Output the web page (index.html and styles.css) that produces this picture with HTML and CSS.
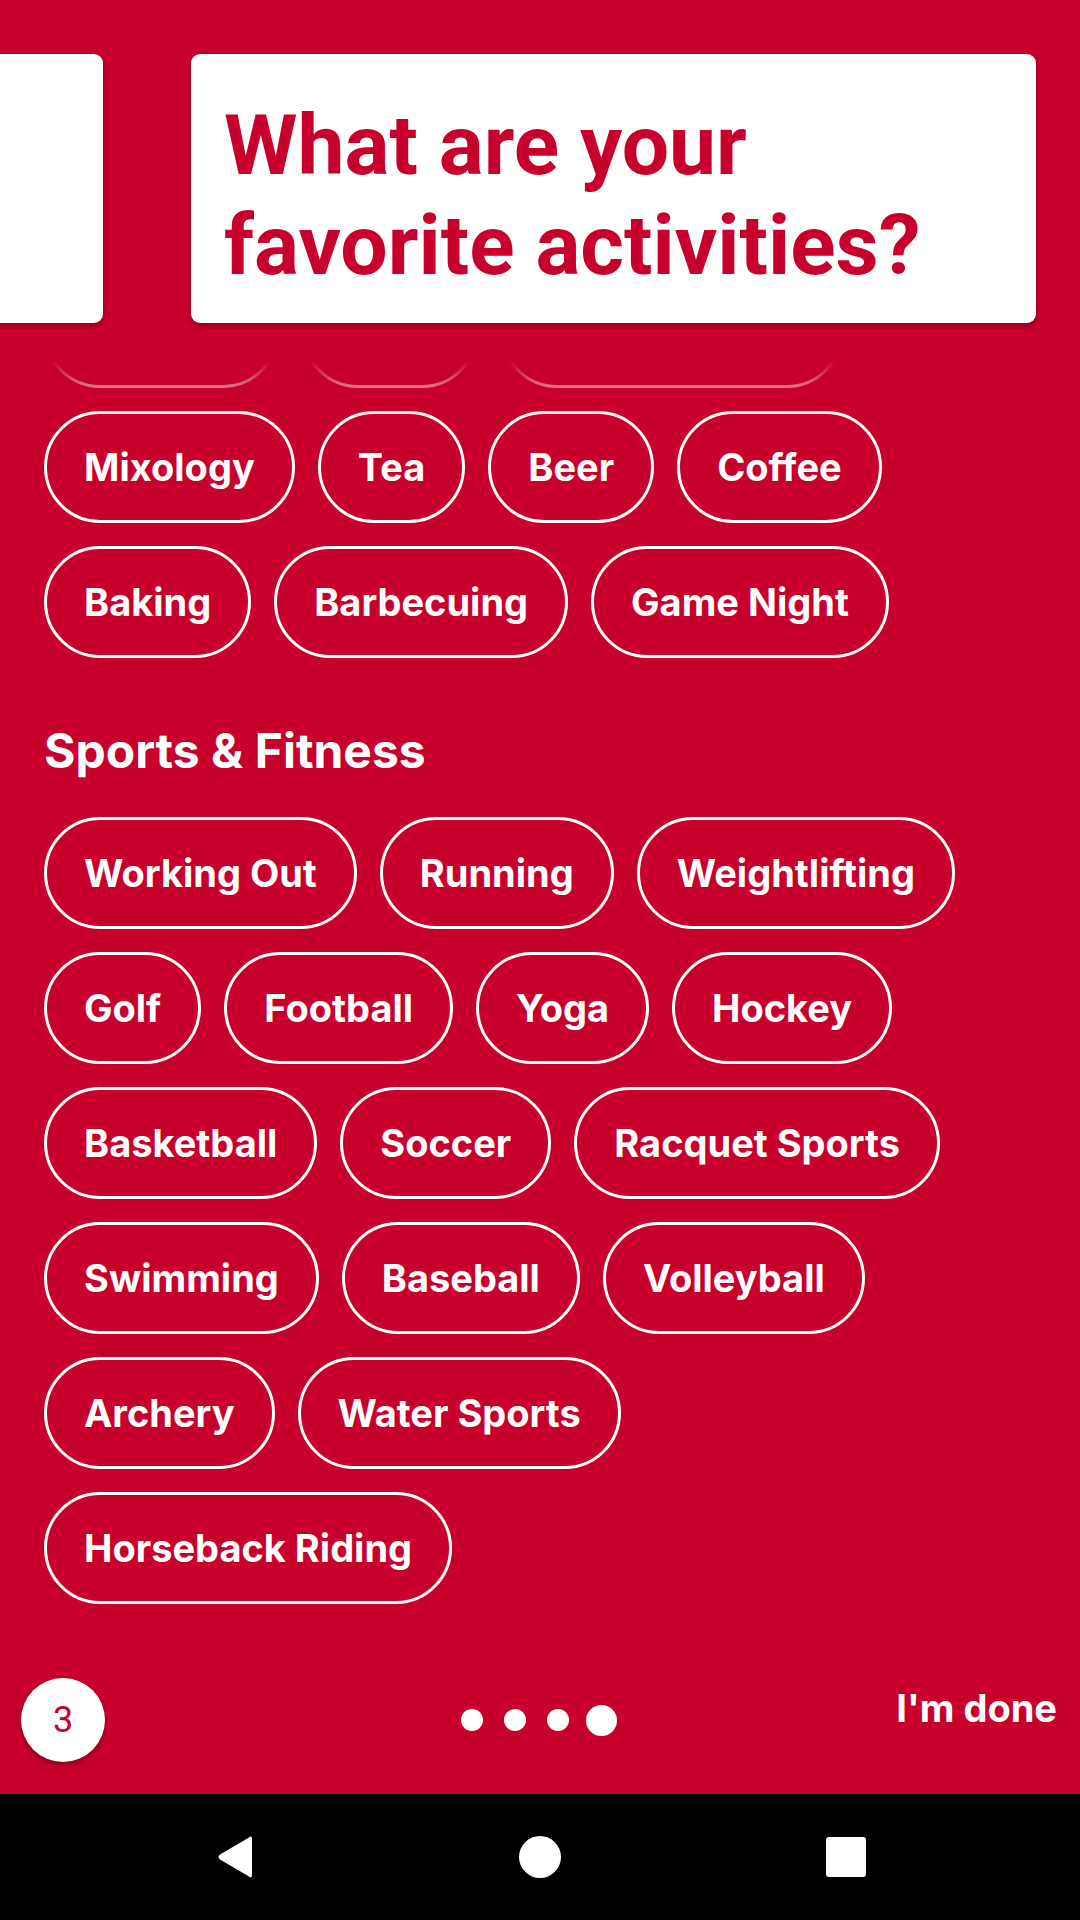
FILE: index.html
```html
<!DOCTYPE html>
<html>
<head>
<meta charset="utf-8">
<link rel="stylesheet" href="styles.css">
</head>
<body>
<div class="screen">
  <div class="scroll">
    <div class="chips">
      <span class="chip">Cooking</span>
      <span class="chip">Wine</span>
      <span class="chip">Dinner Parties</span>
    </div>
    <div class="chips">
      <span class="chip">Mixology</span>
      <span class="chip">Tea</span>
      <span class="chip">Beer</span>
      <span class="chip">Coffee</span>
      <span class="chip">Baking</span>
      <span class="chip">Barbecuing</span>
      <span class="chip">Game Night</span>
    </div>
    <h2 class="section">Sports &amp; Fitness</h2>
    <div class="chips">
      <span class="chip">Working Out</span>
      <span class="chip">Running</span>
      <span class="chip">Weightlifting</span>
      <span class="chip">Golf</span>
      <span class="chip">Football</span>
      <span class="chip">Yoga</span>
      <span class="chip">Hockey</span>
      <span class="chip">Basketball</span>
      <span class="chip">Soccer</span>
      <span class="chip">Racquet Sports</span>
      <span class="chip">Swimming</span>
      <span class="chip">Baseball</span>
      <span class="chip">Volleyball</span>
      <span class="chip">Archery</span>
      <span class="chip">Water Sports</span>
      <span class="chip">Horseback Riding</span>
    </div>
  </div>

  <div class="header">
    <div class="card card-prev"></div>
    <div class="card card-main">
      <h1 class="title">What are your favorite activities?</h1>
    </div>
  </div>
  <div class="fade"></div>

  <div class="bottombar">
    <div class="count">3</div>
    <div class="dots">
      <span class="dot"></span>
      <span class="dot"></span>
      <span class="dot"></span>
      <span class="dot dot-active"></span>
    </div>
    <div class="done">I'm done</div>
  </div>

  <div class="navbar">
    <svg class="nav-icon" width="40" height="44" viewBox="0 0 40 44">
      <path d="M36 4 L36 40 Q36 44 33 41.5 L4 24.5 Q1 22 4 19.5 L33 2.5 Q36 0 36 4 Z" fill="#fff"/>
    </svg>
    <span class="home"></span>
    <span class="square"></span>
  </div>
</div>
</body>
</html>
```

FILE: styles.css
```css
* { box-sizing: border-box; }
html, body { margin: 0; padding: 0; }
body {
  width: 1080px;
  height: 1920px;
  overflow: hidden;
  background: #c8002c;
  font-family: Inter, "Open Sans", sans-serif;
  color: #fff;
}
.screen {
  position: relative;
  width: 1080px;
  height: 1920px;
  display: flex;
  flex-direction: column;
}
.scroll {
  flex: 1;
  overflow: hidden;
  padding: 276px 44px 0 44px;
  display: flex;
  flex-direction: column;
  gap: 23px;
}
.chips {
  display: flex;
  flex-wrap: wrap;
  gap: 23px 23px;
}
.chip {
  height: 112px;
  border: 3px solid #fff;
  border-radius: 56px;
  padding: 0 37px;
  display: flex;
  align-items: center;
  font-size: 38px;
  font-weight: 700;
  letter-spacing: 0;
  white-space: nowrap;
}
.section {
  margin: 42px 0 15px 0;
  font-size: 48px;
  line-height: 56px;
  font-weight: 700;
  letter-spacing: 0;
}
.header {
  position: absolute;
  top: 0;
  left: 0;
  right: 0;
  padding: 54px 44px 0 0;
  display: flex;
  justify-content: flex-end;
  gap: 88px;
  overflow: hidden;
  height: 330px;
  background: #c8002c;
}
.card {
  flex: none;
  width: 845px;
  height: 269px;
  background: #fff;
  border-radius: 9px;
  box-shadow: 0 3px 6px rgba(0,0,0,0.3);
}
.card-main {
  padding: 42px 33px 0 33px;
}
.title {
  margin: 0;
  font-family: Roboto, "Liberation Sans", sans-serif;
  font-size: 84px;
  line-height: 100px;
  font-weight: 700;
  color: #c8002c;
  letter-spacing: 0;
}
.fade {
  position: absolute;
  left: 0;
  right: 0;
  top: 330px;
  height: 88px;
  background: linear-gradient(to bottom, #c8002c 0%, #c8002c 35%, rgba(200,0,44,0) 100%);
}
.bottombar {
  flex: none;
  height: 190px;
  display: grid;
  grid-template-columns: 1fr auto 1fr;
  align-items: center;
  padding: 42px 23px 0 21px;
}
.count {
  width: 84px;
  height: 84px;
  border-radius: 50%;
  background: #fff;
  color: #c8002c;
  font-family: Roboto, sans-serif;
  font-size: 36px;
  display: flex;
  align-items: center;
  justify-content: center;
  box-shadow: 0 3px 5px rgba(0,0,0,0.3);
}
.dots {
  display: flex;
  align-items: center;
  gap: 21px;
}
.dot {
  width: 22px;
  height: 22px;
  border-radius: 50%;
  background: #fff;
}
.dot-active {
  width: 31px;
  height: 31px;
  margin-left: -4px;
}
.done {
  justify-self: end;
  font-size: 38px;
  font-weight: 700;
  letter-spacing: 0;
  margin-bottom: 24px;
}
.navbar {
  flex: none;
  height: 126px;
  background: #000;
  display: flex;
  align-items: center;
}
.nav-icon {
  margin-left: 216px;
}
.home {
  width: 42px;
  height: 42px;
  border-radius: 50%;
  background: #fff;
  margin-left: 263px;
}
.square {
  width: 40px;
  height: 40px;
  border-radius: 3px;
  background: #fff;
  margin-left: 265px;
}
```
